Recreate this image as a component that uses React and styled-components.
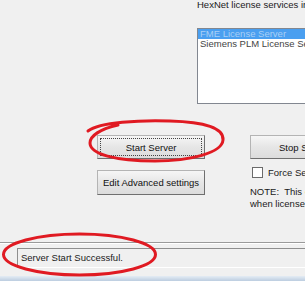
import styled, { createGlobalStyle } from 'styled-components'

const GlobalStyle = createGlobalStyle`
    html, body {
        margin: 0;
        padding: 0;
        background: #f0f0f0;
    }
`

const Window = styled.div`
    position: relative;
    display: flex;
    flex-direction: column;
    width: 305px;
    height: 281px;
    overflow: hidden;
    background: #f0f0f0;
    font-family: "Liberation Sans", Arial, sans-serif;
    font-size: 9.5px;
    color: #1a1a1a;
`

const TopSection = styled.div`
    display: flex;
    flex-direction: column;
    padding-left: 197px;
`

const Label = styled.div`
    margin-top: -1px;
    line-height: 11px;
    white-space: nowrap;
`

const ListBox = styled.div`
    margin-top: 18px;
    width: 140px;
    height: 74px;
    background: #ffffff;
    border: 1px solid #828790;
    border-right: none;
    flex-shrink: 0;
`

const ListItem = styled.div`
    height: 10px;
    line-height: 10px;
    padding-left: 2px;
    white-space: nowrap;
    background: ${({ $selected }) => ($selected ? '#4a9ff0' : 'transparent')};
    color: ${({ $selected }) => ($selected ? '#a9cff5' : '#444')};
`

const ButtonArea = styled.div`
    display: flex;
    gap: 45px;
    margin-top: 31px;
    padding-left: 97px;
`

const Column = styled.div`
    display: flex;
    flex-direction: column;
    flex-shrink: 0;
    width: ${({ $width }) => $width}px;
`

const Button = styled.button`
    height: ${({ $height }) => $height || 24}px;
    width: ${({ $width }) => $width || 108}px;
    margin-top: ${({ $gap }) => $gap || 0}px;
    padding: 0;
    font-family: inherit;
    font-size: 9.5px;
    color: #111;
    background: linear-gradient(#f6f6f6, #e6e6e6 50%, #dcdcdc);
    border: 1px solid #b4b4b4;
    border-right-color: #6f6f6f;
    border-bottom-color: #6f6f6f;
    border-radius: 0;
    text-align: ${({ $left }) => ($left ? 'left' : 'center')};
    padding-left: ${({ $left }) => ($left ? '28px' : '0')};
    outline: ${({ $focused }) => ($focused ? '1px dotted #444' : 'none')};
    outline-offset: -4px;
    flex-shrink: 0;
`

const CheckRow = styled.div`
    display: flex;
    align-items: center;
    gap: 5px;
    margin-top: 8px;
    padding-left: 2px;
    height: 11px;
    white-space: nowrap;
`

const CheckBox = styled.span`
    width: 9px;
    height: 9px;
    background: #fff;
    border: 1px solid #6b6b6b;
    flex-shrink: 0;
`

const Note = styled.div`
    margin-top: 8px;
    line-height: 12px;
    white-space: nowrap;
`

const Footer = styled.div`
    margin-top: auto;
    display: flex;
    flex-direction: column;
`

const Separator = styled.div`
    height: 1px;
    background: #9a9a9a;
    border-bottom: 1px solid #ffffff;
`

const StatusBox = styled.div`
    margin: 4px 0 0 17px;
    height: 17px;
    width: 300px;
    padding: 1px 0 0 3px;
    line-height: 16px;
    border-top: 1px solid #8e8e8e;
    border-left: 1px solid #8e8e8e;
    border-bottom: 1px solid #ffffff;
    white-space: nowrap;
`

const BottomEdge = styled.div`
    margin-top: 8px;
    height: 5px;
    background: linear-gradient(#e4ecf4, #bccde0);
`

const Annotation = styled.svg`
    position: absolute;
    left: 0;
    top: 0;
    pointer-events: none;
`

export default function App() {
    return (
        <Window>
            <GlobalStyle />
            <TopSection>
                <Label>HexNet license services installed</Label>
                <ListBox>
                    <ListItem $selected>FME License Server</ListItem>
                    <ListItem>Siemens PLM License Server</ListItem>
                </ListBox>
            </TopSection>
            <ButtonArea>
                <Column $width={108}>
                    <Button $focused>Start Server</Button>
                    <Button $height={25} $gap={11}>Edit Advanced settings</Button>
                </Column>
                <Column $width={160}>
                    <Button $width={120} $left>Stop Server</Button>
                    <CheckRow>
                        <CheckBox />
                        Force Server Stop
                    </CheckRow>
                    <Note>
                        NOTE:&nbsp; This option stops the server
                        <br />
                        when licenses are in use.
                    </Note>
                </Column>
            </ButtonArea>
            <Footer>
                <Separator />
                <StatusBox>Server Start Successful.</StatusBox>
                <BottomEdge />
            </Footer>
            <Annotation width="305" height="281" viewBox="0 0 305 281">
                <g fill="none" stroke="#e01a22" strokeWidth="3" strokeLinecap="round">
                    <path d="M 88 131 C 100 122, 140 120, 170 121 C 205 122, 224 128, 223 140 C 222 153, 190 161, 155 161 C 115 161, 90 154, 90 143 C 90 136, 100 129, 118 125" />
                    <ellipse cx="79.5" cy="254.5" rx="76" ry="20.5" />
                </g>
            </Annotation>
        </Window>
    )
}
